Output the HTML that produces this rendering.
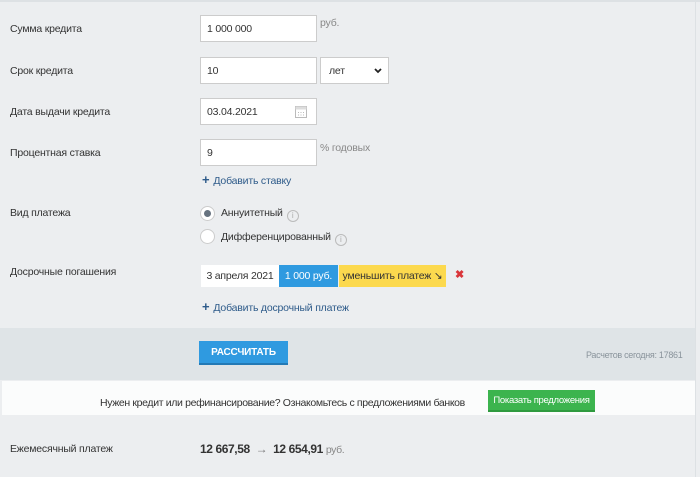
<!DOCTYPE html>
<html><head><meta charset="utf-8"><style>
*{box-sizing:border-box;margin:0;padding:0}
body{width:700px;height:477px;background:#eceef0;font-family:"Liberation Sans",sans-serif;font-size:10.5px;letter-spacing:-0.2px;color:#333;position:relative;overflow:hidden}
.a{position:absolute;white-space:nowrap}
.lbl{left:10px}
.inp{background:#fff;border:1px solid #ccc;height:27px;padding:7px 6px}
.grey{color:#888}
.link{color:#2e5b8a}
.plus{font-weight:bold;color:#2e5b8a;font-size:13px;margin-right:4px}
.info{display:inline-block;width:12px;height:12px;border:1px solid #bbb;border-radius:50%;color:#aaa;font-size:8px;text-align:center;line-height:10px;margin-left:4px;vertical-align:-2px;letter-spacing:0}
</style></head><body>
<div class="a" style="left:0;top:0;width:700px;height:2px;background:#dde1e4"></div>
<div class="a" style="right:4px;top:0;width:1px;height:477px;background:#dde1e4"></div>
<div class="a lbl" style="top:23px">Сумма кредита</div>
<div class="a inp" style="left:200px;top:15px;width:117px">1 000 000</div>
<div class="a grey" style="left:320px;top:17px">руб.</div>
<div class="a lbl" style="top:65px">Срок кредита</div>
<div class="a inp" style="left:200px;top:57px;width:117px">10</div>
<div class="a inp" style="left:320px;top:57px;width:69px;padding-left:8px">лет<svg style="position:absolute;right:6px;top:10px" width="8" height="6"><path d="M1 1l3 3 3-3" fill="none" stroke="#222" stroke-width="1.8"/></svg></div>
<div class="a lbl" style="top:106px">Дата выдачи кредита</div>
<div class="a inp" style="left:200px;top:98px;width:117px">03.04.2021
<svg style="position:absolute;right:9px;top:6px" width="12" height="13"><rect x="0.5" y="1.5" width="11" height="11" fill="none" stroke="#bbb"/><rect x="0.5" y="1.5" width="11" height="3" fill="#ddd"/><g fill="#bbb"><rect x="3" y="7" width="1" height="1"/><rect x="5.5" y="7" width="1" height="1"/><rect x="8" y="7" width="1" height="1"/><rect x="3" y="9.5" width="1" height="1"/><rect x="5.5" y="9.5" width="1" height="1"/><rect x="8" y="9.5" width="1" height="1"/></g></svg></div>
<div class="a lbl" style="top:147px">Процентная ставка</div>
<div class="a inp" style="left:200px;top:139px;width:117px">9</div>
<div class="a grey" style="left:320px;top:142px">% годовых</div>
<div class="a link" style="left:202px;top:172px"><span class="plus">+</span>Добавить ставку</div>
<div class="a lbl" style="top:207px">Вид платежа</div>
<div class="a" style="left:200px;top:206px;width:15px;height:15px;border-radius:50%;background:#fff;border:1px solid #ccc"><div style="margin:3px;width:7px;height:7px;border-radius:50%;background:#66727f"></div></div>
<div class="a" style="left:221px;top:207px">Аннуитетный<span class="info">i</span></div>
<div class="a" style="left:200px;top:229px;width:15px;height:15px;border-radius:50%;background:#fff;border:1px solid #ccc"></div>
<div class="a" style="left:221px;top:231px">Дифференцированный<span class="info">i</span></div>
<div class="a lbl" style="top:266px">Досрочные погашения</div>
<div class="a" style="left:201px;top:265px;width:78px;height:22px;background:#fff;text-align:center;line-height:22px">3 апреля 2021</div>
<div class="a" style="left:279px;top:265px;width:59px;height:22px;background:#2f9ae0;color:#fff;text-align:center;line-height:22px">1 000 руб.</div>
<div class="a" style="left:339px;top:265px;width:107px;height:22px;background:#fcd94e;text-align:center;line-height:22px">уменьшить платеж ↘</div>
<div class="a" style="left:455px;top:268px;color:#d9353a;font-weight:bold;font-size:11px">✖</div>
<div class="a link" style="left:202px;top:299px"><span class="plus">+</span>Добавить досрочный платеж</div>
<div class="a" style="left:0;top:328px;width:695px;height:52px;background:#dfe4e7"></div>
<div class="a" style="left:199px;top:341px;width:89px;height:24px;background:#2f9ae0;border-bottom:2px solid #2379b5;color:#fff;font-weight:bold;font-size:10px;text-align:center;line-height:23px">РАССЧИТАТЬ</div>
<div class="a" style="left:586px;top:350px;color:#8a949c;font-size:9px;letter-spacing:-0.3px">Расчетов сегодня: 17861</div>
<div class="a" style="left:2px;top:381px;width:693px;height:34px;background:#fbfcfc"></div>
<div class="a" style="left:100px;top:397px;letter-spacing:-0.35px">Нужен кредит или рефинансирование? Ознакомьтесь с предложениями банков</div>
<div class="a" style="left:488px;top:390px;width:107px;height:22px;background:#3cb44e;border-bottom:2px solid #2f9a3f;color:#fff;font-size:9.5px;text-align:center;line-height:21px;letter-spacing:-0.3px">Показать предложения</div>
<div class="a lbl" style="top:443px">Ежемесячный платеж</div>
<div class="a" style="left:200px;top:442px;font-size:12px;font-weight:bold;letter-spacing:-0.4px">12 667,58 <span style="color:#777;font-weight:normal">&nbsp;→&nbsp;</span> 12 654,91 <span class="grey" style="font-weight:normal;font-size:10.5px">руб.</span></div>
</body></html>
